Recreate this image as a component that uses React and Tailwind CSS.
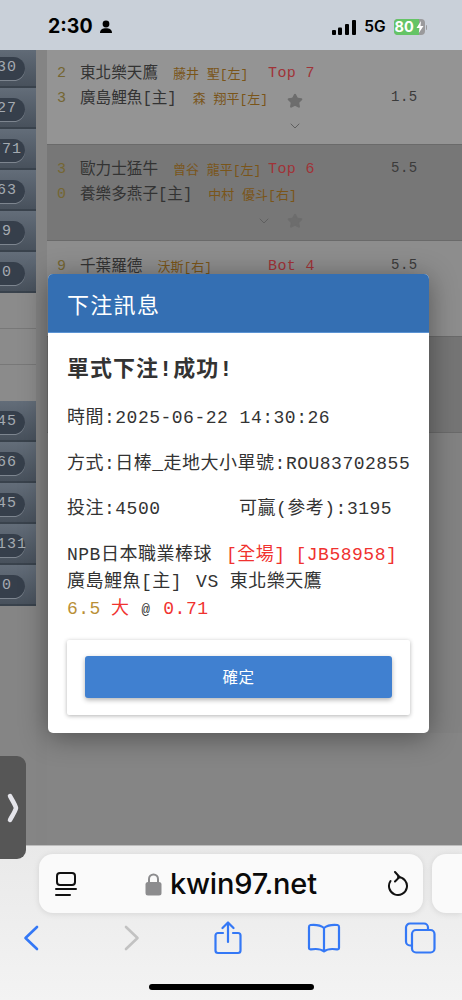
import { Star, ChevronDown } from 'lucide-react'

const MONO = "font-['Liberation_Mono','Noto_Sans_CJK_TC',monospace]"

const TOP_CELLS = ['30', '27', '771', '63', '9', '0']
const BOTTOM_CELLS = ['45', '66', '45', '131', '0']

function SideCell({ value }) {
  return (
    <div className="h-[41px] pt-[4px] flex items-center bg-gradient-to-b from-[#636d79] to-[#48515c] border-b-2 border-[#39424c]">
      <div className={`w-[50px] ml-[-25px] h-[23px] rounded-full bg-[#363f4b] shadow-[0_1px_0_#7d858f] flex items-center justify-center ${value === '131' ? 'pl-[24px]' : 'pl-[14px]'} text-[15px] tracking-[1px] text-[#a4aab1] ${MONO}`}>
        {value}
      </div>
    </div>
  )
}

function Chevron() {
  return <ChevronDown size={16} className="text-[#5f5f5f]" strokeWidth={1.5} />
}

function GrayStar() {
  return <Star size={16} className="text-[#6d6d6d]" fill="#6d6d6d" />
}

function Team({ name, pitcher, gap }) {
  return (
    <div className="flex items-center whitespace-nowrap">
      <span className="text-[15.6px] text-[#333333]">{name}</span>
      <span className={`text-[13px] text-[#7a5519] ${gap}`}>{pitcher}</span>
    </div>
  )
}

function Game({ bg, lines }) {
  return (
    <div className={`border-b border-[#6a6a6a] pl-[10px] grid grid-cols-[23px_188px_123px_1fr] auto-rows-[25px] items-center ${bg} ${MONO}`}>
      {lines}
    </div>
  )
}

function Score({ value }) {
  return <span className="text-[15px] text-[#756632]">{value}</span>
}

function Odds({ value }) {
  return <span className="text-[14px] tracking-[0.5px] text-[#3b3b3b] mt-[-4px]">{value}</span>
}

function Inning({ value }) {
  return <span className="text-[15px] tracking-[0.4px] text-[#a03338]">{value}</span>
}

function StatusBar() {
  return (
    <div className="h-[50px] shrink-0 bg-[#c9d0d9] flex items-center pl-[48px] pr-[35px] pt-[4px]">
      <span className="font-['Inter',sans-serif] font-bold text-[19.5px] text-black">2:30</span>
      <svg width="14" height="14" viewBox="0 0 14 14" className="ml-[6px]">
        <circle cx="7" cy="4" r="3.4" fill="#000" />
        <path d="M1 13c0-3.4 2.6-4.8 6-4.8s6 1.4 6 4.8z" fill="#000" />
      </svg>
      <svg width="24" height="15" viewBox="0 0 24 15" className="ml-auto">
        <rect x="0" y="10" width="4" height="5" rx="1" fill="#000" />
        <rect x="6" y="7.5" width="4" height="7.5" rx="1" fill="#000" />
        <rect x="13" y="4" width="4" height="11" rx="1" fill="#000" />
        <rect x="20" y="0" width="4" height="15" rx="1" fill="#000" />
      </svg>
      <span className="ml-[8px] font-['Inter',sans-serif] font-semibold text-[15.5px] text-black">5G</span>
      <div className="ml-[8px] flex items-center">
        <div className="relative w-[31px] h-[16px] rounded-[4px] bg-[#9a9a9c] overflow-hidden">
          <div className="w-[25px] h-full bg-[#65c466] flex items-center pl-[1px] font-['Inter',sans-serif] font-bold text-[14.5px] text-white">
            80
          </div>
          <svg width="8" height="12" viewBox="0 0 8 12" className="absolute left-[22px] top-[2px]">
            <path d="M5 0 0.5 7H3.5L2.8 12 7.5 5H4.5z" fill="#fff" />
          </svg>
        </div>
        <div className="w-[1.5px] h-[5px] rounded-r bg-[#9a9a9c] ml-[1px]" />
      </div>
    </div>
  )
}

function Backdrop() {
  return (
    <div className="h-full flex bg-[#858585]">
      <div className="w-[36px] shrink-0 mt-[-3px]">
        {TOP_CELLS.map((v, i) => <SideCell key={i} value={v} />)}
        <div className="h-[108px] flex flex-col">
          <div className="h-[36px] bg-[#8b8b8b] border-b border-[#787878]" />
          <div className="h-[36px] bg-[#8b8b8b] border-b border-[#787878]" />
          <div className="h-[36px] bg-[#8b8b8b]" />
        </div>
        {BOTTOM_CELLS.map((v, i) => <SideCell key={i} value={v} />)}
      </div>
      <div className="w-[11px] shrink-0 bg-[#848484]" />
      <div className="flex-1 min-w-0">
        <Game
          bg="h-[95px] pt-[12px] bg-[#949494]"
          lines={
            <>
              <Score value="2" />
              <Team name="東北樂天鷹" pitcher="藤井 聖[左]" gap="ml-[15px]" />
              <Inning value="Top 7" />
              <span />
              <Score value="3" />
              <Team name="廣島鯉魚[主]" pitcher="森 翔平[左]" gap="ml-[16px]" />
              <div className="pl-[19px] pt-[3px]"><GrayStar /></div>
              <Odds value="1.5" />
              <span />
              <span />
              <div className="pl-[19px] pt-[3px]"><Chevron /></div>
            </>
          }
        />
        <Game
          bg="h-[96px] pt-[13px] bg-[#777777]"
          lines={
            <>
              <Score value="3" />
              <Team name="歐力士猛牛" pitcher="曾谷 龍平[左]" gap="ml-[15px]" />
              <Inning value="Top 6" />
              <Odds value="5.5" />
              <Score value="0" />
              <Team name="養樂多燕子[主]" pitcher="中村 優斗[右]" gap="ml-[16px]" />
              <span />
              <span />
              <span />
              <div className="flex justify-end mr-[-4px]"><Chevron /></div>
              <div className="pl-[19px]"><GrayStar /></div>
            </>
          }
        />
        <Game
          bg="h-[96px] pt-[14px] bg-[#8d8d8d]"
          lines={
            <>
              <Score value="9" />
              <Team name="千葉羅德" pitcher="沃斯[右]" gap="ml-[15px]" />
              <Inning value="Bot 4" />
              <Odds value="5.5" />
            </>
          }
        />
        <Game bg="h-[96px] bg-[#757575]" lines={null} />
        <div className="h-[300px] bg-[#828282]" />
      </div>
    </div>
  )
}

function ResultModal() {
  return (
    <div className={`absolute left-[48px] top-[224px] w-[381px] h-[459px] rounded-[5px] overflow-hidden bg-white shadow-[0_4px_28px_rgba(0,0,0,0.4)] ${MONO}`}>
      <div className="h-[59px] bg-[#346fb3] border-b border-[#5b93d3] flex items-center pl-[19px] text-[22px] text-white font-['Noto_Sans_CJK_TC',sans-serif] tracking-[1.3px]">
        下注訊息
      </div>
      <div className="px-[19px] pt-[23px] text-[#333333] text-[18px] tracking-[0.5px]">
        <div className="h-[26px] leading-[26px] text-[22px] font-bold tracking-[1px] mt-[2px]">單式下注!成功!</div>
        <div className="mt-[21px] h-[26px] leading-[26px]">時間:2025-06-22 14:30:26</div>
        <div className="mt-[20px] h-[26px] leading-[26px] whitespace-nowrap">方式:日棒_走地大小單號:ROU83702855</div>
        <div className="mt-[19px] h-[26px] leading-[26px] flex">
          <span className="w-[172px]">投注:4500</span>
          <span>可贏(參考):3195</span>
        </div>
        <div className="mt-[20px] h-[27px] leading-[27px] whitespace-nowrap">
          NPB日本職業棒球
          <span className="ml-[14px] text-[#f0322f]">[全場]</span>
          <span className="ml-[10px] text-[#f0322f]">[JB58958]</span>
        </div>
        <div className="h-[27px] leading-[27px] whitespace-nowrap">
          廣島鯉魚[主]
          <span className="ml-[14px]">VS</span>
          <span className="ml-[11px]">東北樂天鷹</span>
        </div>
        <div className="h-[27px] leading-[27px] whitespace-nowrap">
          <span className="text-[#b98f36]">6.5</span>
          <span className="ml-[10px] text-[#f0322f]">大</span>
          <span className="ml-[12px] text-[14px]">@</span>
          <span className="ml-[13px] text-[#f0322f]">0.71</span>
        </div>
        <div className="mt-[17px] h-[75px] rounded-[2px] bg-white shadow-[0_1px_4px_rgba(0,0,0,0.3)] px-[18px] pt-[16px]">
          <button className="w-full h-[42px] rounded-[3px] bg-[#4080d0] text-white text-[15.5px] tracking-[0.5px] shadow-[0_2px_5px_rgba(0,0,0,0.3)] font-['Noto_Sans_CJK_TC',sans-serif]">
            確定
          </button>
        </div>
      </div>
    </div>
  )
}

function SafariBar() {
  return (
    <div className="h-[155px] shrink-0 bg-gradient-to-b from-[#e9e9e9] to-[#f3f3f3] border-t border-[#bdbdbd] pt-[8px]">
      <div className="flex gap-[9px] pl-[39px]">
        <div className="w-[384px] h-[59px] shrink-0 rounded-[14px] bg-[#fafafa] shadow-[0_1px_6px_rgba(0,0,0,0.1)] flex items-center pl-[16px] pr-[14px]">
          <svg width="22" height="26" viewBox="0 0 22 26" fill="none" stroke="#111" strokeWidth="2">
            <rect x="2" y="2" width="18" height="12" rx="3" />
            <path d="M1 18h20M1 24h14" strokeLinecap="round" />
          </svg>
          <svg width="17" height="24" viewBox="0 0 17 24" className="ml-[68px]">
            <path d="M4 11V7a4.5 4.5 0 0 1 9 0v4" fill="none" stroke="#8c8c8e" strokeWidth="2" />
            <rect x="0.5" y="10" width="16" height="13.5" rx="2.5" fill="#8c8c8e" />
          </svg>
          <span className="ml-[8px] font-['Inter',sans-serif] font-medium text-[29px] tracking-[-0.2px] text-[#0a0a0a]">kwin97.net</span>
          <svg width="22" height="26" viewBox="0 0 22 26" fill="none" stroke="#111" strokeWidth="2" strokeLinecap="round" strokeLinejoin="round" className="ml-auto">
            <path d="M11 6a9 9 0 1 1-7.500 4" />
            <path d="M8 1l4.500 5L8 10.500" />
          </svg>
        </div>
        <div className="flex-1 h-[59px] rounded-l-[14px] bg-[#fafafa] shadow-[0_1px_6px_rgba(0,0,0,0.1)]" />
      </div>
      <div className="h-[48px] mt-[1px] pl-[23px] flex items-center">
        <svg width="16" height="26" viewBox="0 0 16 26" fill="none" stroke="#3478f6" strokeWidth="2.6" strokeLinecap="round" strokeLinejoin="round">
          <path d="M14 2 2.500 13 14 24" />
        </svg>
        <svg width="16" height="26" viewBox="0 0 16 26" fill="none" stroke="#c2c2c2" strokeWidth="2.6" strokeLinecap="round" strokeLinejoin="round" className="ml-[85px]">
          <path d="M2 2l11.500 11L2 24" />
        </svg>
        <svg width="28" height="34" viewBox="0 0 28 34" fill="none" stroke="#3478f6" strokeWidth="2.2" strokeLinecap="round" strokeLinejoin="round" className="ml-[74px]">
          <path d="M9 12H4a2.500 2.500 0 0 0-2.500 2.500v15A2.500 2.500 0 0 0 4 32h20a2.500 2.500 0 0 0 2.500-2.500v-15A2.500 2.500 0 0 0 24 12h-5" />
          <path d="M14 21V2M8.500 7 14 1.500 19.500 7" />
        </svg>
        <svg width="34" height="30" viewBox="0 0 34 30" fill="none" stroke="#3478f6" strokeWidth="2.2" strokeLinecap="round" strokeLinejoin="round" className="ml-[65px]">
          <path d="M17 5C14 2.500 9 1.500 3.500 2 2.500 2.200 2 3 2 4v21c0 1 1 1.600 2 1.400 5-.8 10-.4 13 2 3-2.400 8-2.800 13-2 1 .2 2-.4 2-1.400V4c0-1-.5-1.800-1.500-2C25 1.500 20 2.500 17 5zM17 5v23" />
        </svg>
        <svg width="32" height="32" viewBox="0 0 32 32" fill="none" stroke="#3478f6" strokeWidth="2.2" className="ml-[63px]">
          <rect x="8" y="8" width="22.500" height="22.500" rx="4" />
          <path d="M8 23.500H6a4 4 0 0 1-4-4V5.500a4 4 0 0 1 4-4h14a4 4 0 0 1 4 4V8" />
        </svg>
      </div>
      <div className="w-[165px] h-[6px] rounded-full bg-black ml-[149px] mt-[22px]" />
    </div>
  )
}

export default function App() {
  return (
    <div className="relative w-[462px] h-[1000px] overflow-hidden flex flex-col bg-white">
      <StatusBar />
      <div className="relative h-[795px] shrink-0 overflow-hidden">
        <Backdrop />
        <ResultModal />
      </div>
      <SafariBar />
      {/* side handle sits over both the page and the browser bar */}
      <div className="absolute left-0 top-[756px] w-[26px] h-[103px] rounded-r-[9px] bg-[#565656] flex items-center">
        <svg width="14" height="32" viewBox="0 0 14 32" fill="none" stroke="#e4e4ea" strokeWidth="4.5" strokeLinecap="round" strokeLinejoin="round" className="ml-[6px]">
          <path d="M4 4c2 4 5 8 6 12-1 4-4 8-6 12" />
        </svg>
      </div>
    </div>
  )
}
